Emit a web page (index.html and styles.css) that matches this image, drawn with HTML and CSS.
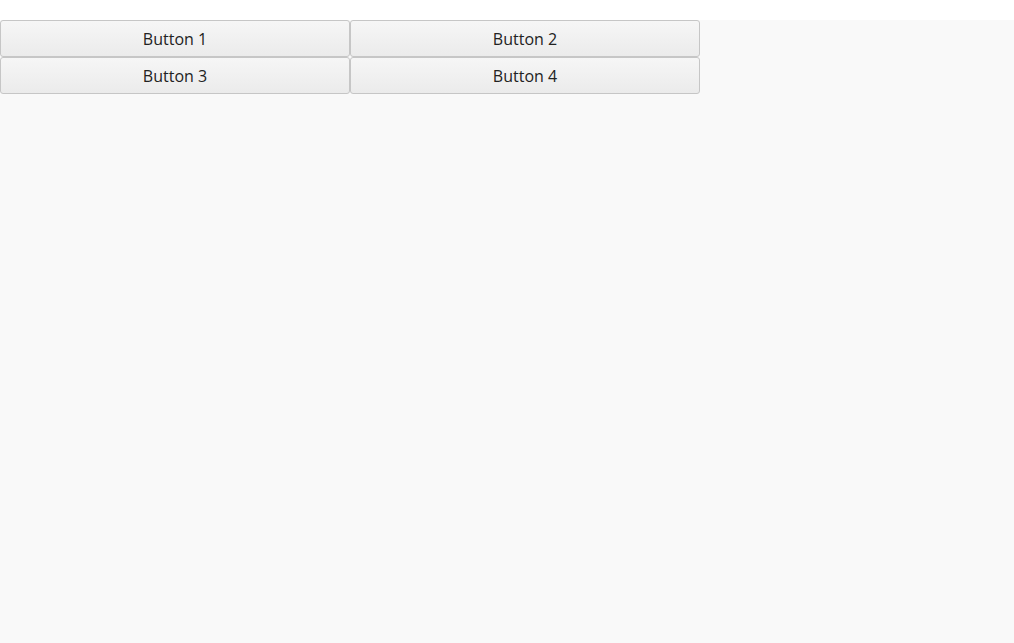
FILE: index.html
```html
<!DOCTYPE html>
<html>
<head>
<meta charset="utf-8">
<link rel="stylesheet" href="styles.css">
</head>
<body>
<div class="top-strip"></div>
<main class="pane">
  <div class="grid">
    <button class="btn">Button 1</button>
    <button class="btn">Button 2</button>
    <button class="btn">Button 3</button>
    <button class="btn">Button 4</button>
  </div>
</main>
</body>
</html>
```
FILE: styles.css
```css
html, body {
  margin: 0;
  padding: 0;
  height: 100%;
  background: #ffffff;
}
body {
  display: flex;
  flex-direction: column;
  font-family: "Open Sans", "Liberation Sans", sans-serif;
}
.top-strip {
  height: 20px;
  flex: none;
}
.pane {
  flex: 1;
  background: #f9f9f9;
}
.grid {
  display: grid;
  grid-template-columns: 350px 350px;
  grid-auto-rows: 37px;
}
.btn {
  margin: 0;
  padding: 0;
  border: 1px solid #c6c6c6;
  border-radius: 3px;
  background: linear-gradient(to bottom, #f6f6f6, #ebebeb);
  font-family: "Open Sans", "Liberation Sans", sans-serif;
  font-size: 16px;
  color: #222222;
  cursor: default;
}
```
